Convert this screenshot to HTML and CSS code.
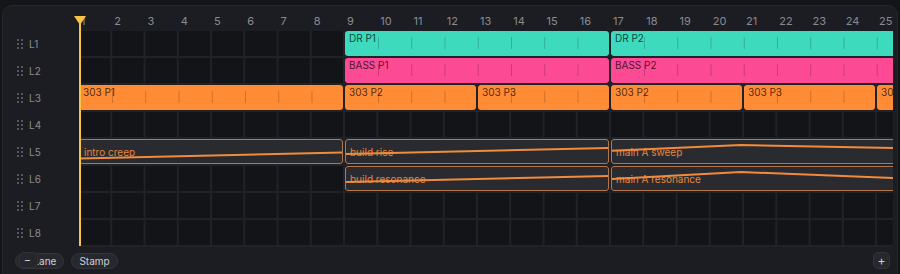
FILE: index.html
```html
<!DOCTYPE html>
<html lang="en">
<head>
    <meta charset="UTF-8">
    <meta name="viewport" content="width=device-width, initial-scale=1.0">
    <title>Arrangement</title>
    <link rel="stylesheet" href="styles.css">
</head>
<body>
    <div class="panel">
        <div class="header">
            <div class="corner"></div>
            <div class="ruler">
                <span>1</span><span>2</span><span>3</span><span>4</span><span>5</span>
                <span>6</span><span>7</span><span>8</span><span>9</span><span>10</span>
                <span>11</span><span>12</span><span>13</span><span>14</span><span>15</span>
                <span>16</span><span>17</span><span>18</span><span>19</span><span>20</span>
                <span>21</span><span>22</span><span>23</span><span>24</span><span>25</span>
            </div>
        </div>

        <div class="body">
            <div class="lanes">
                <div class="lane"><span class="grip"><i></i><i></i><i></i><i></i><i></i><i></i></span>L1</div>
                <div class="lane"><span class="grip"><i></i><i></i><i></i><i></i><i></i><i></i></span>L2</div>
                <div class="lane"><span class="grip"><i></i><i></i><i></i><i></i><i></i><i></i></span>L3</div>
                <div class="lane"><span class="grip"><i></i><i></i><i></i><i></i><i></i><i></i></span>L4</div>
                <div class="lane"><span class="grip"><i></i><i></i><i></i><i></i><i></i><i></i></span>L5</div>
                <div class="lane"><span class="grip"><i></i><i></i><i></i><i></i><i></i><i></i></span>L6</div>
                <div class="lane"><span class="grip"><i></i><i></i><i></i><i></i><i></i><i></i></span>L7</div>
                <div class="lane"><span class="grip"><i></i><i></i><i></i><i></i><i></i><i></i></span>L8</div>
            </div>

            <div class="grid">
                <div class="row">
                    <div class="pat dr" style="grid-column: 9 / 17">DR P1</div>
                    <div class="pat dr" style="grid-column: 17 / 29">DR P2</div>
                </div>
                <div class="row">
                    <div class="pat bass" style="grid-column: 9 / 17">BASS P1</div>
                    <div class="pat bass" style="grid-column: 17 / 29">BASS P2</div>
                </div>
                <div class="row">
                    <div class="pat acid" style="grid-column: 1 / 9">303 P1</div>
                    <div class="pat acid" style="grid-column: 9 / 13">303 P2</div>
                    <div class="pat acid" style="grid-column: 13 / 17">303 P3</div>
                    <div class="pat acid" style="grid-column: 17 / 21">303 P2</div>
                    <div class="pat acid" style="grid-column: 21 / 25">303 P3</div>
                    <div class="pat acid" style="grid-column: 25 / 29">303 P1</div>
                </div>
                <div class="row"></div>
                <div class="row">
                    <div class="clip" style="grid-column: 1 / 9">
                        <span>intro creep</span>
                        <svg viewBox="0 0 264 25" preserveAspectRatio="none"><polyline points="0,19.5 264,13.5"/></svg>
                    </div>
                    <div class="clip" style="grid-column: 9 / 17">
                        <span>build rise</span>
                        <svg viewBox="0 0 264 25" preserveAspectRatio="none"><polyline points="0,15 264,9"/></svg>
                    </div>
                    <div class="clip" style="grid-column: 17 / 27">
                        <span>main A sweep</span>
                        <svg viewBox="0 0 330.5 25" preserveAspectRatio="none"><polyline points="0,11.7 130,6 282,9 330.5,10"/></svg>
                    </div>
                </div>
                <div class="row">
                    <div class="clip" style="grid-column: 9 / 17">
                        <span>build resonance</span>
                        <svg viewBox="0 0 264 25" preserveAspectRatio="none"><polyline points="0,16 264,10"/></svg>
                    </div>
                    <div class="clip" style="grid-column: 17 / 27">
                        <span>main A resonance</span>
                        <svg viewBox="0 0 330.5 25" preserveAspectRatio="none"><polyline points="0,13 130,6 282,12 330.5,13"/></svg>
                    </div>
                </div>
                <div class="row"></div>
                <div class="row"></div>
            </div>
        </div>

        <div class="footer">
            <div class="btn-wrap">
                <button class="btn lane-btn">+ Lane</button>
                <button class="btn minus">−</button>
            </div>
            <button class="btn">Stamp</button>
            <button class="btn square">+</button>
        </div>

        <div class="playhead"></div>
    </div>
</body>
</html>
```

FILE: styles.css
```css
body {
    margin: 0;
    background: #141518;
    font-family: 'Inter', 'Liberation Sans', sans-serif;
    overflow: hidden;
}
.panel {
    position: relative;
    margin: 5px 0 0 2px;
    width: 896px;
    height: 280px;
    box-sizing: border-box;
    background: #1c1d22;
    border: 1px solid #26272c;
    border-radius: 10px 10px 0 0;
    overflow: hidden;
}
.header {
    display: flex;
    height: 25px;
}
.corner {
    width: 76px;
    flex: none;
}
.ruler {
    width: 814px;
    display: grid;
    grid-template-columns: repeat(28, 33.25px);
    overflow: hidden;
    font-size: 11px;
    color: #8a8b91;
}
.ruler span {
    padding: 8px 0 0 2px;
    line-height: 14px;
}
.body {
    display: flex;
}
.lanes {
    width: 76px;
    flex: none;
}
.lane {
    height: 27px;
    box-sizing: border-box;
    padding: 0 0 2px 14px;
    display: flex;
    align-items: center;
    gap: 6px;
    font-size: 10px;
    color: #8b8c92;
}
.grip {
    display: grid;
    grid-template-columns: 2px 2px;
    gap: 2px;
}
.grip i {
    width: 2px;
    height: 2px;
    background: #56575d;
}
.grid {
    width: 814px;
    overflow: hidden;
    background-color: #131418;
    background-image:
        linear-gradient(to right, transparent 31.25px, #212227 31.25px),
        linear-gradient(to bottom, transparent 25px, #212227 25px);
    background-size: 33.25px 27px;
}
.row {
    display: grid;
    grid-template-columns: repeat(28, 33.25px);
    height: 27px;
}
.pat, .clip {
    position: relative;
    height: 25px;
    margin-right: 2px;
    box-sizing: border-box;
    border-radius: 3px;
    font-size: 10px;
    white-space: nowrap;
    overflow: hidden;
}
.pat {
    padding: 1px 4px;
    line-height: 12px;
    color: rgba(0, 0, 0, 0.72);
}
.pat::before {
    content: "";
    position: absolute;
    left: 33.25px;
    right: 0;
    top: 6px;
    bottom: 7px;
    background: linear-gradient(to right, rgba(0, 0, 0, 0.2) 1px, transparent 1px) 0 0 / 33.25px 100% repeat-x;
}
.dr {
    background: #3ddabd;
}
.bass {
    background: #fc4a95;
}
.acid {
    background: #ff8b35;
}
.clip {
    display: flex;
    align-items: center;
    padding-left: 4px;
    background: #2a2b30;
    border: 1px solid #b5774a;
    color: #e4883f;
}
.clip svg {
    position: absolute;
    left: -1px;
    top: -1px;
    width: calc(100% + 2px);
    height: 25px;
}
.clip polyline {
    fill: none;
    stroke: #f28b3c;
    stroke-width: 2;
    vector-effect: non-scaling-stroke;
}
.footer {
    display: flex;
    align-items: center;
    gap: 7px;
    height: 27px;
    padding: 0 7px 0 12px;
}
.btn-wrap {
    position: relative;
    display: flex;
}
.btn {
    height: 16px;
    padding: 0 7px;
    border: 1px solid #33343a;
    border-radius: 8px;
    background: #27282d;
    color: #cfd0d3;
    font-family: 'Inter', 'Liberation Sans', sans-serif;
    font-size: 10px;
    line-height: 14px;
}
.lane-btn {
    padding: 0 7px 0 8px;
}
.minus {
    position: absolute;
    left: 4px;
    top: -1px;
    width: 19px;
    height: 16px;
    padding: 0 2px 0 0;
    display: flex;
    align-items: center;
    justify-content: center;
    border-radius: 5px;
    background: #26272c;
    border-color: #303136;
    font-size: 11px;
}
.square {
    margin-left: auto;
    width: 17px;
    height: 17px;
    padding: 0;
    display: flex;
    align-items: center;
    justify-content: center;
    border-radius: 5px;
    font-size: 12px;
}
.playhead {
    position: absolute;
    left: 75.5px;
    top: 10px;
    width: 2px;
    height: 230px;
    background: #f5c443;
}
.playhead::before {
    content: "";
    position: absolute;
    left: -5px;
    top: 0;
    border-left: 6px solid transparent;
    border-right: 6px solid transparent;
    border-top: 9px solid #f5c443;
}
```
